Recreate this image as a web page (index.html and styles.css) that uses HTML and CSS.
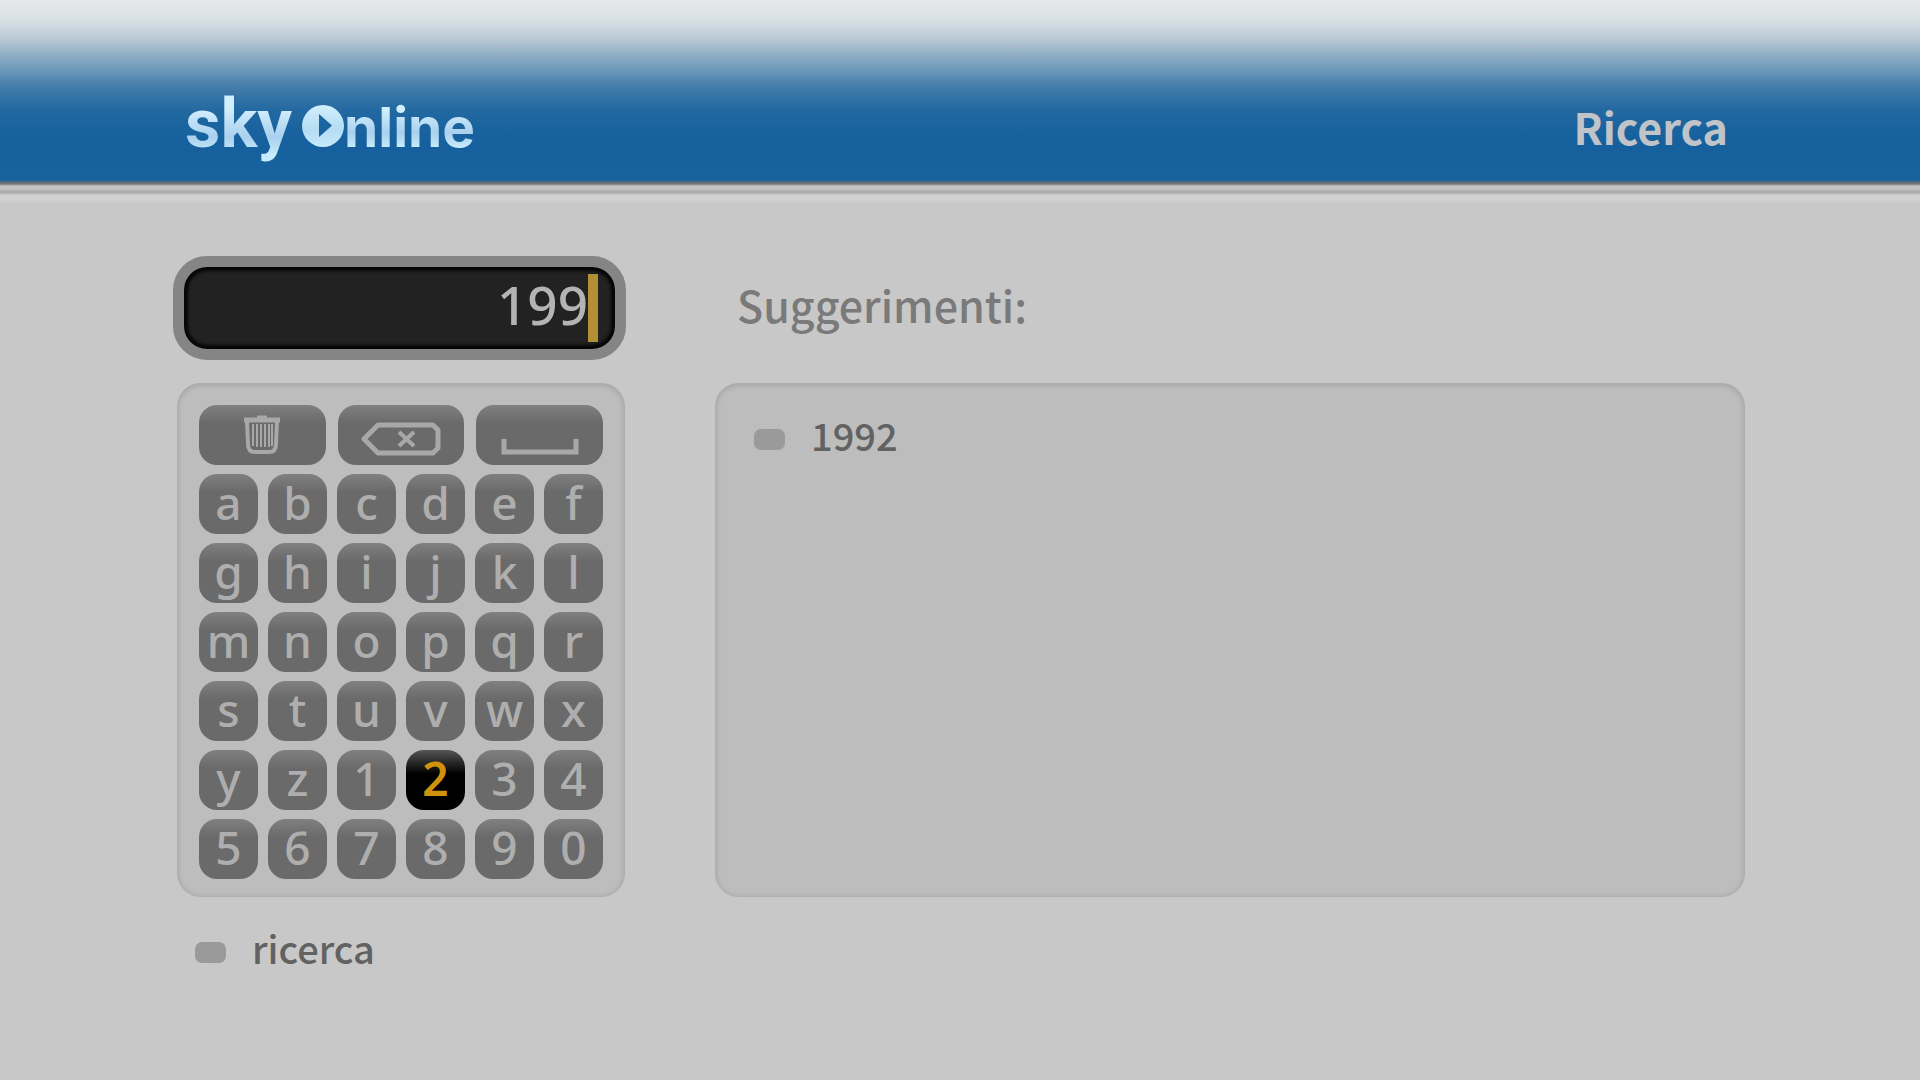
FILE: index.html
```
<!DOCTYPE html>
<html lang="it" dir="ltr">
  <head>
    <meta charset="utf-8">
    <meta name="viewport" content="width=device-width, initial-scale=1">
    <title>Sky Online - Ricerca</title>
    <link rel="stylesheet" href="styles.css">
  </head>
  <body>
<div class="page">
  <header class="header">
    <a class="logo" href="#">
      <span class="logoSky">sky</span>
      <span class="logoOnline">
        <svg class="logoPlay" viewBox="0 0 42 42" role="img" aria-label="O">
          <defs>
            <linearGradient id="playFill" x1="0" y1="0" x2="0" y2="1">
              <stop offset="0" stop-color="#d2effd"/>
              <stop offset=".6" stop-color="#b4dcf4"/>
              <stop offset="1" stop-color="#c6ebfc"/>
            </linearGradient>
          </defs>
          <path fill="url(#playFill)" fill-rule="evenodd" d="M21 0a21 21 0 1 0 0 42a21 21 0 1 0 0-42zM17 9L30 20.500L17 32z"/>
        </svg>
        <span class="logoText">nline</span>
      </span>
    </a>
    <h1>Ricerca</h1>
  </header>
  <main class="content">
    <div class="searchBlock">
      <div class="inputBlock">
        <input id="query" class="query" type="text" value="199" aria-label="Ricerca">
        <span class="caret"></span>
      </div>
      <div class="keyboard">
        <div class="actionKeys">
          <button class="key" type="button" aria-label="Cancella tutto">
            <svg width="38" height="40" viewBox="0 0 38 40" fill="none" stroke="#a8a8a8">
              <path stroke-width="5" d="M1 5h36"/>
              <path stroke-width="3" d="M14 2h10"/>
              <path stroke-width="4" d="M4 6l1 23q0 8 7 8h14q7 0 7-8l1-23"/>
              <path stroke-width="2" d="M10 9v22M14 9v23M18 9v23M22 9v23M26 9v23M29 9v22"/>
            </svg>
          </button>
          <button class="key" type="button" aria-label="Cancella">
            <svg class="low" width="80" height="34" viewBox="0 0 80 34" fill="none" stroke="#a8a8a8">
              <path stroke-width="5" stroke-linejoin="round" d="M17 3h55l5 5v18l-5 5h-55L3 17z"/>
              <path stroke-width="4" d="M38 10l15 14M53 10l-15 14"/>
            </svg>
          </button>
          <button class="key" type="button" aria-label="Spazio">
            <svg class="lower" width="78" height="16" viewBox="0 0 78 16" fill="none" stroke="#a8a8a8">
              <path stroke-width="5" d="M3 0v13h72V0"/>
            </svg>
          </button>
        </div>
        <div class="letterKeys">
          <button class="key" type="button">a</button>
          <button class="key" type="button">b</button>
          <button class="key" type="button">c</button>
          <button class="key" type="button">d</button>
          <button class="key" type="button">e</button>
          <button class="key" type="button">f</button>
          <button class="key" type="button">g</button>
          <button class="key" type="button">h</button>
          <button class="key" type="button">i</button>
          <button class="key" type="button">j</button>
          <button class="key" type="button">k</button>
          <button class="key" type="button">l</button>
          <button class="key" type="button">m</button>
          <button class="key" type="button">n</button>
          <button class="key" type="button">o</button>
          <button class="key" type="button">p</button>
          <button class="key" type="button">q</button>
          <button class="key" type="button">r</button>
          <button class="key" type="button">s</button>
          <button class="key" type="button">t</button>
          <button class="key" type="button">u</button>
          <button class="key" type="button">v</button>
          <button class="key" type="button">w</button>
          <button class="key" type="button">x</button>
          <button class="key" type="button">y</button>
          <button class="key" type="button">z</button>
          <button class="key" type="button">1</button>
          <button class="key selected" type="button">2</button>
          <button class="key" type="button">3</button>
          <button class="key" type="button">4</button>
          <button class="key" type="button">5</button>
          <button class="key" type="button">6</button>
          <button class="key" type="button">7</button>
          <button class="key" type="button">8</button>
          <button class="key" type="button">9</button>
          <button class="key" type="button">0</button>
        </div>
      </div>
      <button class="item searchButton" type="button"><span class="bullet"></span>ricerca</button>
    </div>
    <section class="suggestBlock">
      <h2>Suggerimenti:</h2>
      <div class="suggestions">
        <a class="item" href="#"><span class="bullet"></span>1992</a>
      </div>
    </section>
  </main>
</div>
<script>
  query = document.getElementById('query');
  document.querySelectorAll('.letterKeys .key').forEach(function(key) {
    key.onclick = function() {
      query.value += key.textContent;
    };
  });
  actions = document.querySelectorAll('.actionKeys .key');
  actions[0].onclick = function() { query.value = ''; };
  actions[1].onclick = function() { query.value = query.value.slice(0, -1); };
  actions[2].onclick = function() { query.value += ' '; };
</script>
  </body>
</html>
```
FILE: styles.css
```
* {
  box-sizing: border-box;
  margin: 0px;
  padding: 0px;
  font-family: "Noto Sans CJK SC", "Noto Sans", sans-serif;
}
:root {
  --pageBG: #c8c8c8;
  --panelBG: #bdbdbd;
  --panelEdge: #a9a9a9;
  --keyBG: #6a6a6a;
  --keyText: #aeaeae;
}
body {
  background-color: var(--pageBG);
}
.page {
  min-height: 100vh;
}
.header {
  display: flex;
  justify-content: space-between;
  align-items: flex-end;
  height: 204px;
  padding: 0px 192px 48px 185px;
  background: linear-gradient(#e6e7e9 0px, #dde3e4 16px, #cdd8e0 27px, #b7c8d5 40px, #8dacc3 56px, #6795b8 72px, #4a80ac 84px, #3272a5 98px, #2369a1 110px, #19639f 128px, #15609d 146px, #1962a0 180px, #5a6a7c 182px, #777777 184px, #c4c4c6 186px, #c4c4c6 189px, #adadad 191px, #adadad 193px, #d2d2d2 195px, #d2d2d2 199px, #c8c8c8 204px);
}
.logo {
  display: flex;
  align-items: baseline;
  gap: 10px;
  text-decoration: none;
  line-height: 58px;
}
.logoSky, .logoText {
  font-weight: 700;
  color: transparent;
  background: linear-gradient(#d2effd 20%, #a9d0ee 60%, #c6ebfc 85%);
  background-clip: text;
  -webkit-background-clip: text;
}
/* room below the line box for the tail of the y */
.logoSky {
  margin-bottom: -12px;
  padding-bottom: 12px;
  font-family: Roboto, sans-serif;
  font-size: 69px;
}
.logoText {
  font-family: Inter, sans-serif;
}
.logoOnline {
  display: flex;
  align-items: baseline;
  font-size: 55px;
}
.logoPlay {
  width: 42px;
  height: 42px;
}
h1 {
  font-size: 43px;
  font-weight: 700;
  line-height: 60px;
  color: #c0c4c8;
}
.content {
  display: flex;
  gap: 90px;
  padding: 52px 175px 40px 177px;
}
.searchBlock {
  width: 448px;
}
.inputBlock {
  display: flex;
  align-items: center;
  height: 104px;
  margin: 0px -1px 23px -4px;
  padding: 0px 17px 0px 4px;
  border: 11px solid #858585;
  border-radius: 34px;
  background-color: #222222;
  box-shadow: inset 0px 0px 3px 4px #060606;
}
.query {
  flex: 1;
  min-width: 0px;
  height: 68px;
  padding-bottom: 8px;
  border: none;
  outline: none;
  background: transparent;
  color: #b4b4b4;
  font-family: "Noto Sans", sans-serif;
  font-size: 53px;
  font-weight: 500;
  text-align: right;
}
.caret {
  width: 10px;
  height: 68px;
  background-color: #b38f35;
}
.keyboard {
  padding: 22px 22px 18px;
}
.keyboard, .suggestions {
  height: 514px;
  border-radius: 24px;
  background-color: var(--panelBG);
  box-shadow: inset 0px 1px 4px 2px var(--panelEdge);
}
.actionKeys {
  display: grid;
  grid-template-columns: repeat(3, 1fr);
  gap: 12px;
  margin-bottom: 9px;
}
.letterKeys {
  display: grid;
  grid-template-columns: repeat(6, 1fr);
  gap: 9px 10px;
}
.key {
  display: flex;
  align-items: center;
  justify-content: center;
  height: 60px;
  border: none;
  border-radius: 18px;
  background: linear-gradient(#808080, var(--keyBG) 30%);
  color: var(--keyText);
  font-family: "Noto Sans", sans-serif;
  font-size: 46px;
  font-weight: 500;
  line-height: 60px;
  cursor: pointer;
}
.letterKeys .key {
  padding-bottom: 4px;
}
.key .low {
  margin-top: 8px;
}
.key .lower {
  margin-top: 24px;
}
.letterKeys .selected {
  background: linear-gradient(#555555, #000000 40%);
  color: #d0920c;
  font-weight: 600;
}
.item {
  display: flex;
  align-items: center;
  gap: 26px;
  border: none;
  background: none;
  color: #626262;
  font-size: 38px;
  font-weight: 500;
  line-height: 60px;
  text-decoration: none;
}
.searchButton {
  margin: 21px 18px;
}
.bullet {
  width: 31px;
  height: 21px;
  margin-top: 8px;
  border-radius: 7px;
  background-color: #9a9a9a;
}
.suggestBlock {
  flex: 1;
}
h2 {
  height: 127px;
  padding: 18px 22px;
  font-size: 43px;
  font-weight: 500;
  line-height: 60px;
  color: #7a7a7a;
}
.suggestions {
  padding: 22px 39px;
}
```
